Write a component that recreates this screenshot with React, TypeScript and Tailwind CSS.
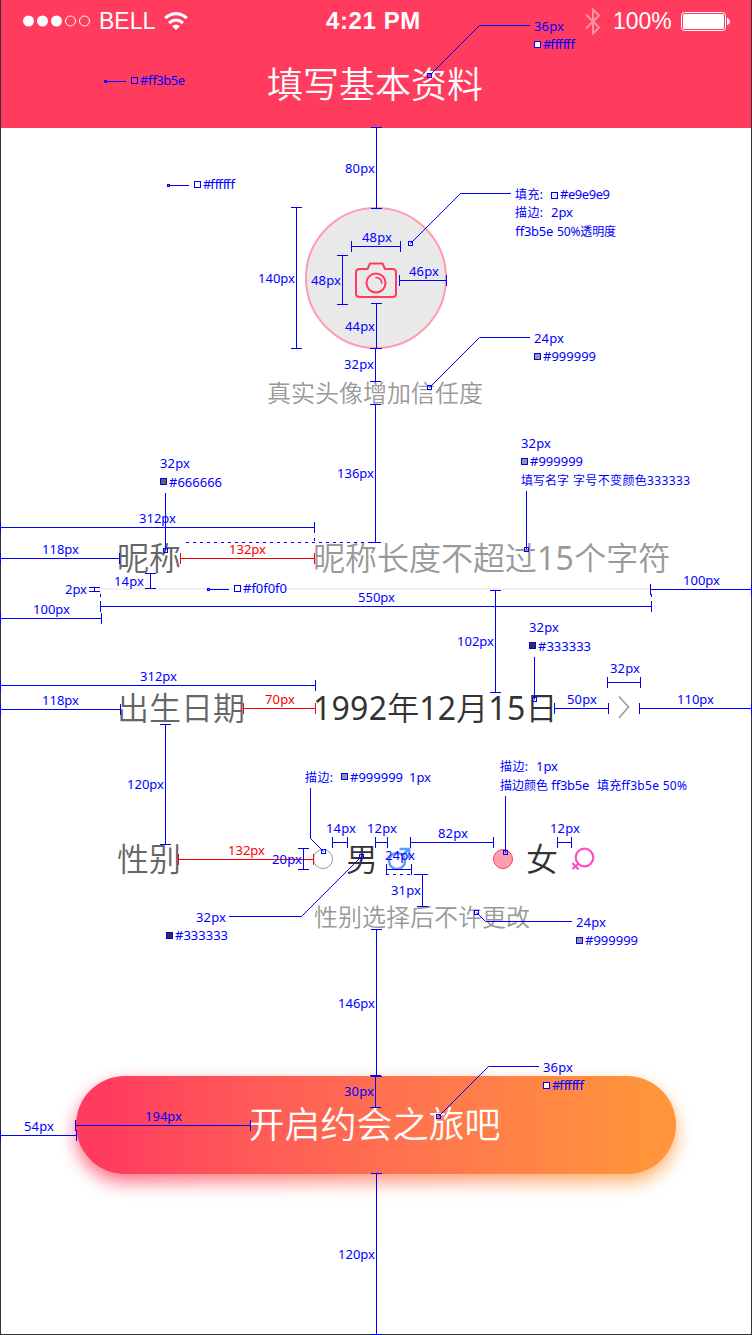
import React from "react";

const BLUE = "#0000ff";
const RED = "#ff0000";

type Span = [from: number, to: number, at: number, color?: string];
type Label = [text: string, x: number, baseline: number, width: number, color?: string];

const horizontal: Span[] = [
  [351, 400, 246],
  [399, 446, 280],
  [0, 314, 527],
  [0, 119, 558],
  [180, 314, 558, RED],
  [0, 101, 618],
  [100, 651, 606],
  [650, 751, 589],
  [0, 315, 685],
  [0, 120, 709],
  [243, 315, 708, RED],
  [554, 608, 708],
  [607, 640, 682],
  [639, 751, 708],
  [178, 313, 859, RED],
  [332, 347, 842],
  [375, 387, 842],
  [386, 411, 869],
  [410, 493, 842],
  [557, 571, 842],
  [0, 76, 1135],
  [75, 250, 1125],
];

const vertical: Span[] = [
  [127, 208, 376],
  [207, 348, 296],
  [255, 304, 342],
  [303, 348, 376],
  [348, 381, 375],
  [404, 542, 375],
  [573, 588, 150],
  [587, 591, 94],
  [590, 692, 495],
  [724, 844, 165],
  [848, 869, 303],
  [874, 906, 422],
  [929, 1076, 376],
  [1075, 1107, 375],
  [1173, 1334, 376],
];

const dashed = [
  "M186 542.5H372",
  "M314.5 538V543",
  "M100.5 594V600",
  "M651.5 594V600",
  "M386 874.5H420",
];

const leaders = [
  "429.5,75.5 479.5,25.5 530,25.5",
  "105.5,81.5 126,81.5",
  "168.5,185.5 189,185.5",
  "410.5,243.5 460.5,193.5 511,193.5",
  "429.5,387.5 479.5,337.5 530,337.5",
  "165.5,493 165.5,550.5",
  "526.5,491 526.5,549.5",
  "208.5,589.5 229,589.5",
  "534.5,657 534.5,699.5",
  "310.5,788 310.5,838.5 323.5,851.5",
  "505.5,796 505.5,852.5",
  "361.5,856.5 301.5,916.5 229,916.5",
  "476.5,912.5 485.5,921.5 572,921.5",
  "438.5,1116.5 488.5,1066.5 539,1066.5",
];

const anchors: [number, number, number][] = [
  [429, 75, 4],
  [105, 81, 2],
  [168, 185, 2],
  [410, 243, 4],
  [429, 387, 4],
  [165, 550, 4],
  [526, 549, 4],
  [208, 589, 2],
  [534, 699, 4],
  [323, 851, 4],
  [505, 852, 4],
  [361, 856, 4],
  [476, 912, 4],
  [438, 1116, 4],
];

const swatches: [number, number, string][] = [
  [131, 77, "#ff3b5e"],
  [194, 181, "#ffffff"],
  [534, 41, "#ffffff"],
  [551, 192, "#e9e9e9"],
  [534, 353, "#999999"],
  [160, 478, "#666666"],
  [521, 458, "#999999"],
  [234, 585, "#ffffff"],
  [529, 642, "#333333"],
  [341, 773, "#999999"],
  [166, 932, "#333333"],
  [576, 937, "#999999"],
  [543, 1082, "#ffffff"],
];

const labels: Label[] = [
  ["36px", 534, 31, 30],
  ["#ffffff", 543, 49, 32],
  ["#ff3b5e", 140, 85, 45],
  ["80px", 345, 173, 30],
  ["#ffffff", 203, 189, 32],
  ["填充:", 515, 199, 28],
  ["#e9e9e9", 560, 199, 50],
  ["描边:", 515, 217, 28],
  ["2px", 551, 217, 22],
  ["ff3b5e", 515, 236, 38],
  ["50%透明度", 557, 236, 59],
  ["48px", 362, 242, 30],
  ["140px", 258, 283, 37],
  ["48px", 311, 285, 30],
  ["46px", 409, 276, 30],
  ["44px", 345, 331, 30],
  ["32px", 344, 369, 30],
  ["24px", 534, 343, 30],
  ["#999999", 543, 361, 53],
  ["136px", 337, 478, 37],
  ["32px", 160, 468, 30],
  ["#666666", 169, 487, 53],
  ["32px", 521, 448, 30],
  ["#999999", 530, 466, 53],
  ["填写名字", 521, 485, 48],
  ["字号不变颜色333333", 573, 485, 117],
  ["312px", 139, 523, 37],
  ["118px", 42, 554, 37],
  ["132px", 229, 554, 37, RED],
  ["14px", 114, 586, 30],
  ["2px", 65, 594, 22],
  ["#f0f0f0", 243, 593, 44],
  ["100px", 33, 614, 37],
  ["550px", 358, 602, 37],
  ["100px", 683, 585, 37],
  ["102px", 457, 646, 37],
  ["32px", 529, 632, 30],
  ["#333333", 538, 651, 53],
  ["312px", 140, 681, 37],
  ["118px", 42, 705, 37],
  ["70px", 265, 704, 30, RED],
  ["50px", 567, 704, 30],
  ["32px", 610, 673, 30],
  ["110px", 677, 704, 37],
  ["120px", 127, 789, 37],
  ["描边:", 305, 782, 28],
  ["#999999", 350, 782, 53],
  ["1px", 409, 782, 22],
  ["描边:", 500, 771, 28],
  ["1px", 536, 771, 22],
  ["描边颜色", 500, 790, 48],
  ["ff3b5e", 551, 790, 38],
  ["填充ff3b5e 50%", 597, 790, 90],
  ["132px", 228, 855, 37, RED],
  ["20px", 272, 864, 30],
  ["14px", 326, 833, 30],
  ["12px", 367, 833, 30],
  ["24px", 385, 860, 30],
  ["82px", 438, 838, 30],
  ["12px", 550, 833, 30],
  ["31px", 391, 895, 30],
  ["32px", 196, 922, 30],
  ["#333333", 175, 940, 53],
  ["24px", 576, 927, 30],
  ["#999999", 585, 945, 53],
  ["146px", 338, 1008, 37],
  ["30px", 344, 1096, 30],
  ["36px", 543, 1072, 30],
  ["#ffffff", 552, 1090, 32],
  ["54px", 24, 1131, 30],
  ["194px", 145, 1121, 37],
  ["120px", 338, 1259, 37],
];

const hasHan = (text: string) => /[\u4e00-\u9fff]/.test(text);

function Annotations() {
  return (
    <svg
      className="pointer-events-none absolute -left-px top-0 h-[1335px] w-[752px] font-['Noto_Sans','Noto_Sans_CJK_SC',sans-serif] text-[13px] font-normal"
      viewBox="0 0 752 1335"
      fill="none"
    >
      <g shapeRendering="crispEdges">
        {horizontal.map(([a, b, y, c = BLUE], i) => (
          <path
            key={i}
            stroke={c}
            d={`M${a} ${y + 0.5}H${b + 1}M${a + 0.5} ${y - 5}V${y + 6}M${b + 0.5} ${y - 5}V${y + 6}`}
          />
        ))}
        {vertical.map(([a, b, x, c = BLUE], i) => (
          <path
            key={i}
            stroke={c}
            d={`M${x + 0.5} ${a}V${b + 1}M${x - 5} ${a + 0.5}H${x + 6}M${x - 5} ${b + 0.5}H${x + 6}`}
          />
        ))}
        {dashed.map((d) => (
          <path key={d} d={d} stroke={BLUE} strokeDasharray="3 4" />
        ))}
      </g>
      {leaders.map((points) => (
        <polyline key={points} points={points} stroke={BLUE} />
      ))}
      {anchors.map(([x, y, s]) => (
        <rect key={`${x}-${y}`} x={x + 0.5 - s / 2} y={y + 0.5 - s / 2} width={s} height={s} stroke={BLUE} />
      ))}
      {swatches.map(([x, y, fill]) => (
        <rect key={`${x}-${y}`} x={x + 0.5} y={y + 0.5} width="6" height="6" fill={fill} stroke={BLUE} />
      ))}
      {labels.map(([text, x, y, width, c = BLUE]) => (
        <text
          key={`${x}-${y}`}
          className={hasHan(text) ? "text-[12px]" : "text-[13px]"}
          x={x}
          y={y}
          textLength={width}
          fill={c}
        >
          {text}
        </text>
      ))}
    </svg>
  );
}

function StatusBar() {
  return (
    <div className="flex h-[42px] items-center pl-[22px] pr-[20px] font-['Liberation_Sans',sans-serif] text-white">
      <div className="flex w-[303px] items-center">
        <svg className="h-3 w-[68px]" viewBox="0 0 68 12" fill="white">
          <circle cx="5.5" cy="6" r="5.5" />
          <circle cx="19.5" cy="6" r="5.5" />
          <circle cx="33.5" cy="6" r="5.5" />
          <circle cx="47.5" cy="6" r="5" fill="none" stroke="white" />
          <circle cx="61.5" cy="6" r="5" fill="none" stroke="white" />
        </svg>
        <span className="ml-[8px] w-[57px] text-[23px] leading-[42px]">BELL</span>
        <svg className="ml-[8px] h-[19px] w-6" viewBox="0 0 24 19" fill="none" stroke="white" strokeWidth="3">
          <path d="M1.2 6.2Q12 -3 22.8 6.2" />
          <path d="M5 11Q12 5 19 11" />
          <path d="M8.2 14.2Q12 11 15.8 14.2L12 18Z" fill="white" stroke="none" />
        </svg>
      </div>
      <span className="w-[110px] whitespace-nowrap text-[24px] font-bold leading-[42px] tracking-[0.6px]">4:21 PM</span>
      <svg className="ml-[149px] h-[27px] w-4" viewBox="0 0 16 27" fill="none" stroke="white" strokeOpacity="0.45" strokeWidth="2">
        <path d="M1 6.5L14 19.5L8 25.5V1.5L14 7.5L1 20.5" />
      </svg>
      <span className="ml-[12px] w-[60px] text-[23px] leading-[42px]">100%</span>
      <svg className="ml-[8px] h-[19px] w-[50px] shrink-0" viewBox="0 0 50 19" fill="white">
        <rect x="0.5" y="0.5" width="44" height="18" rx="3" fill="none" stroke="white" />
        <rect x="2" y="2" width="41" height="15" rx="1.5" />
        <path d="M46 6Q49 7 49 9.5Q49 12 46 13Z" />
      </svg>
    </div>
  );
}

function CameraIcon() {
  return (
    <svg className="h-12 w-12" viewBox="0 0 48 48" fill="none" stroke="#ff3b5e" strokeWidth="2" strokeLinejoin="round" strokeLinecap="round">
      <path d="M8 15H15.5L18 9.5H30.5L33 15H40.5Q44 15 44 18.5V39.5Q44 43 40.5 43H8Q4 43 4 39.5V18.5Q4 15 8 15Z" />
      <circle cx="24" cy="29" r="9.5" />
      <path d="M24 23.5Q29.5 24 29.7 29" strokeWidth="1.7" />
    </svg>
  );
}

function Digits({ children }: { children: string }) {
  return <span className="font-normal tracking-[0.25px]">{children}</span>;
}

export default function App() {
  return (
    <div className="relative h-[1335px] w-[752px] border-x border-b border-[#333333] bg-white font-['Noto_Sans','Noto_Sans_CJK_SC',sans-serif] font-[350]">
      <header className="h-32 bg-[#ff3b5e] text-white">
        <StatusBar />
        <h1 className="pr-[2px] text-center text-[36px] font-[350] leading-[86px]">填写基本资料</h1>
      </header>

      <main className="flex flex-col">
        <div className="mt-[79px] flex h-[142px] w-[142px] items-center justify-center self-center rounded-full border-2 border-[#ff9daf] bg-[#e9e9e9]">
          <CameraIcon />
        </div>
        <p className="mt-[26px] pr-[2px] text-center text-[24px] leading-9 text-[#999999]">真实头像增加信任度</p>

        <div className="mt-[127px] flex h-10 items-center pl-[116px] text-[32px] leading-10">
          <span className="w-[196px] text-[#666666]">昵称</span>
          <span className="whitespace-nowrap text-[#999999]">
            昵称长度不超过<Digits>15</Digits>个字符
          </span>
        </div>
        <div className="ml-[100px] mt-[10px] h-0.5 w-[550px] bg-[#f0f0f0]" />

        <div className="mt-[98px] flex h-10 items-center pl-[116px] text-[32px] leading-10">
          <span className="w-[196px] text-[#666666]">出生日期</span>
          <span className="w-[244px] whitespace-nowrap text-[#333333]">
            <Digits>1992</Digits>年<Digits>12</Digits>月<Digits>15</Digits>日
          </span>
          <svg className="ml-[50px] h-8 w-8" viewBox="0 0 32 32" fill="none" stroke="#999999" strokeWidth="1.5">
            <path d="M12 4.5L21.5 15L12 26" />
          </svg>
        </div>

        <div className="mt-[111px] flex h-10 items-center pl-[116px] text-[32px] leading-10 text-[#333333]">
          <span className="w-[196px] text-[#666666]">性别</span>
          <span className="h-5 w-5 rounded-full border border-[#999999]" />
          <span className="ml-[13px]">男</span>
          <svg className="ml-[9px] h-6 w-6" viewBox="0 0 24 24" fill="none" stroke="#5b9bff" strokeWidth="2.5">
            <circle cx="10" cy="14" r="8" />
            <path d="M15.5 8.5L22 2M12.5 2H22V11" />
          </svg>
          <span className="ml-[82px] h-5 w-5 rounded-full border border-[#ff3b5e] bg-[#ff9daf]" />
          <span className="ml-[13px]">女</span>
          <svg className="ml-[13px] h-6 w-6" viewBox="0 0 24 24" fill="none" stroke="#ff4dc4" strokeWidth="2.2">
            <circle cx="13.5" cy="10.5" r="8.8" />
            <path d="M7.5 16.5L1.5 22M1.5 16L7.5 22.5" />
          </svg>
        </div>
        <p className="mt-[20px] pl-[313px] text-[24px] leading-9 text-[#999999]">性别选择后不许更改</p>

        <div className="relative ml-[75px] mt-[141px] h-[98px] w-[600px]">
          <div className="absolute inset-0 translate-y-2 rounded-full bg-linear-to-r from-[#ff3b5e] from-10% to-[#ff943a] to-90% opacity-75 blur-[9px]" />
          <button className="relative h-full w-full rounded-full bg-linear-to-r from-[#ff3b5e] from-5% to-[#ff943a] to-95% pr-[3px] text-[36px] font-[350] text-white">
            开启约会之旅吧
          </button>
        </div>
      </main>

      <Annotations />
    </div>
  );
}
